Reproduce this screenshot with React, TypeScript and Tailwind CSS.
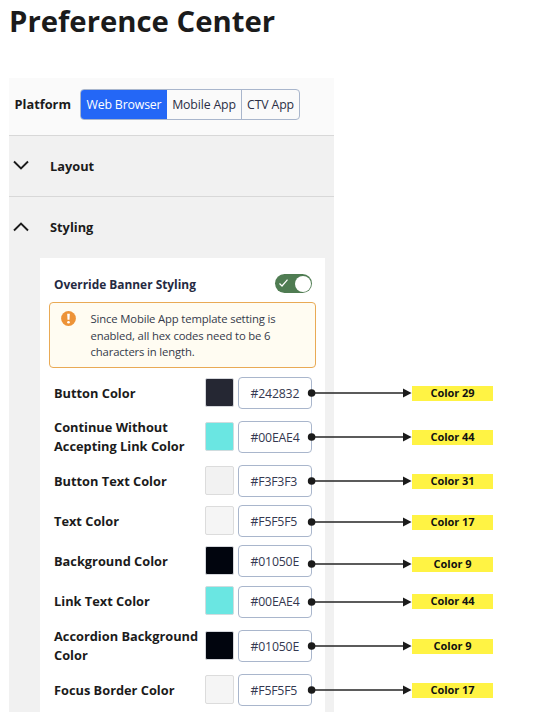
import React from "react";

type Row = {
  label: string;
  hex: string;
  swatch: string;
  note: string;
  height: string;
  noteShift?: string;
};

const rows: Row[] = [
  { label: "Button Color", hex: "#242832", swatch: "bg-[#252733] border-[#d5d7dc]", note: "Color 29", height: "h-[40px]" },
  { label: "Continue Without Accepting Link Color", hex: "#00EAE4", swatch: "bg-[#6ae6e2] border-[#cfdcde]", note: "Color 44", height: "h-[48px]" },
  { label: "Button Text Color", hex: "#F3F3F3", swatch: "bg-[#f2f2f2] border-[#dcdcdc]", note: "Color 31", height: "h-[40px]" },
  { label: "Text Color", hex: "#F5F5F5", swatch: "bg-[#f5f5f5] border-[#dcdcdc]", note: "Color 17", height: "h-[40px]", noteShift: "mt-[1px]" },
  { label: "Background Color", hex: "#01050E", swatch: "bg-[#01050e] border-[#d5d7dc]", note: "Color 9", height: "h-[40px]", noteShift: "mt-[3px]" },
  { label: "Link Text Color", hex: "#00EAE4", swatch: "bg-[#6ae6e2] border-[#cfdcde]", note: "Color 44", height: "h-[41px]" },
  { label: "Accordion Background Color", hex: "#01050E", swatch: "bg-[#01050e] border-[#d5d7dc]", note: "Color 9", height: "h-[48px]" },
  { label: "Focus Border Color", hex: "#F5F5F5", swatch: "bg-[#f5f5f5] border-[#dcdcdc]", note: "Color 17", height: "h-[40px]" },
];

function Chevron({ up = false }: { up?: boolean }) {
  return (
    <svg width="16" height="10" viewBox="0 0 16 10" fill="none" stroke="#1b1b1b" strokeWidth="1.9" className="mb-[2px]">
      <path d={up ? "M1 8.5 L8 1.6 L15 8.5" : "M1 1.5 L8 8.4 L15 1.5"} />
    </svg>
  );
}

// Connector from a hex field to its highlighted color name
function Callout({ text, shift = "" }: { text: string; shift?: string }) {
  return (
    <div className={`absolute left-[68px] top-[7.5px] flex h-[15px] items-center ${shift}`}>
      <svg width="105" height="10" viewBox="0 0 105 10" className="shrink-0">
        <path d="M4 5 H97" stroke="#252525" strokeWidth="1.6" />
        <circle cx="4.6" cy="5" r="3.8" fill="#1b1b1b" />
        <path d="M96 0.6 L104.6 5 L96 9.4 Z" fill="#1b1b1b" />
      </svg>
      <span className="flex h-[15px] w-[81px] items-center justify-center bg-[#fff344] text-[11px] font-bold tracking-[-0.05px] text-[#111]">
        {text}
      </span>
    </div>
  );
}

export default function App() {
  return (
    <main className="h-[727px] w-[539px] overflow-hidden bg-white pl-[9px] font-['Open_Sans','Noto_Sans',sans-serif] text-[#1b1b1b]">
      <h1 className="h-[78px] pt-[1px] text-[29.3px] leading-[40px] font-bold whitespace-nowrap">Preference Center</h1>

      <div className="h-[634px] w-[325px] bg-[#f1f1f1]">
        <div className="flex h-[58px] items-center border-b border-[#d8d8d8] bg-[#fafafa] pb-[5px] pl-[5.5px]">
          <span className="w-[65.5px] pt-[1px] text-[12.8px] font-bold">Platform</span>
          <div className="flex h-[31px] w-[220px] overflow-hidden rounded-[4px] border border-[#a9b6cc] text-[12.3px] tracking-[-0.15px] text-[#2b2f45]">
            <span className="flex w-[86px] items-center justify-center bg-[#2467f6] pt-[2px] text-white">Web Browser</span>
            <span className="flex w-[75px] items-center justify-center border-r border-[#a9b6cc] pt-[2px]">Mobile App</span>
            <span className="flex flex-1 items-center justify-center pt-[2px]">CTV App</span>
          </div>
        </div>

        <div className="flex h-[61px] items-center border-b border-[#d8d8d8] pl-[4px]">
          <Chevron />
          <span className="ml-[21px] pt-[1px] text-[12.8px] font-bold">Layout</span>
        </div>
        <div className="flex h-[61px] items-center pl-[4px]">
          <Chevron up />
          <span className="ml-[21px] text-[12.8px] font-bold">Styling</span>
        </div>

        <section className="ml-[31px] h-[454px] w-[285px] bg-white pt-[16px]">
          <div className="flex h-[19px] items-center justify-between pr-[13px] pl-[14px]">
            <span className="pt-[2px] text-[11.9px] font-bold text-[#252a42]">Override Banner Styling</span>
            <span className="flex h-[19px] w-[37px] items-center justify-between rounded-full bg-[#4f7c52] pr-[1px] pl-[4px]">
              <svg width="9" height="8" viewBox="0 0 9 8" fill="none" stroke="white" strokeWidth="1.2" className="mb-[1px]">
                <path d="M0.5 4.5 L3 7 L8.5 0.7" />
              </svg>
              <i className="h-[16px] w-[16px] rounded-full bg-white" />
            </span>
          </div>

          <div className="mt-[9px] ml-[9px] flex h-[66px] w-[267px] rounded-[4px] border border-[#e9aa55] bg-[#fffcf2] pt-[8px] pl-[11px]">
            <svg width="15" height="15" viewBox="0 0 15 15" className="shrink-0">
              <circle cx="7.5" cy="7.5" r="7.4" fill="#ed9338" />
              <path d="M6.2 2.7 H8.8 L8.5 8.8 H6.5 Z" fill="white" />
              <circle cx="7.5" cy="11.2" r="1.3" fill="white" />
            </svg>
            <p className="ml-[14.5px] text-[11.3px] leading-[16.5px] tracking-[-0.15px] whitespace-nowrap text-[#343a4a]">
              Since Mobile App template setting is
              <br />
              enabled, all hex codes need to be 6
              <br />
              characters in length.
            </p>
          </div>

          <div className="mt-[5px] pl-[14px]">
            {rows.map((row) => (
              <div key={row.label} className={`flex items-center ${row.height}`}>
                <span className="w-[151px] pr-[4px] text-[12.8px] leading-[19px] font-bold">{row.label}</span>
                <i className={`mb-[2px] h-[29px] w-[29px] rounded-[2px] border ${row.swatch}`} />
                <div className="relative ml-[4px] flex h-[32px] w-[74px] items-center rounded-[4px] border border-[#a9b6cc] bg-white pt-[2px] pl-[11.5px] text-[12.3px] tracking-[-0.2px] text-[#343850]">
                  {row.hex}
                  <Callout text={row.note} shift={row.noteShift} />
                </div>
              </div>
            ))}
          </div>
        </section>
      </div>
    </main>
  );
}
